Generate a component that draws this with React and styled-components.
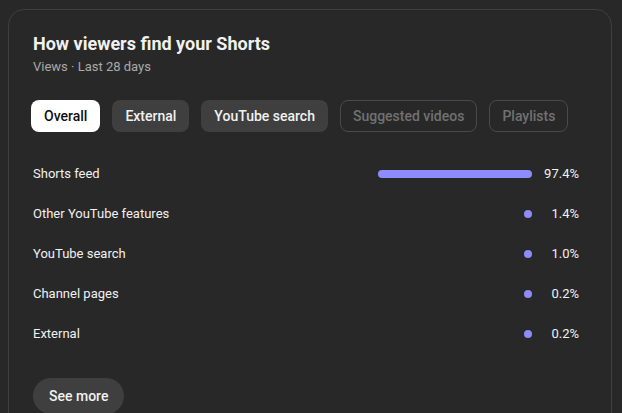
import React from "react";
import styled, { createGlobalStyle } from "styled-components";

const Global = createGlobalStyle`
  html, body { background: #282828; }
  body {
    margin: 0;
    padding: 9px 8px 0;
    font-family: Roboto, "Noto Sans", Arial, sans-serif;
    color: #f1f1f1;
    -webkit-font-smoothing: antialiased;
  }
`;

const Card = styled.section`
  box-sizing: border-box;
  width: 604px;
  border: 1px solid #3f3f3f;
  border-radius: 16px;
  background: #282828;
  padding: 22px 24px 24px;
`;

const Title = styled.h2`
  margin: 0;
  font-size: 18px;
  line-height: 24px;
  font-weight: 700;
  color: #f1f1f1;
`;

const Subtitle = styled.div`
  margin-top: 2px;
  font-size: 13px;
  line-height: 18px;
  color: #aaaaaa;
`;

const Chips = styled.div`
  display: flex;
  gap: 12px;
  margin: 24px 0 0 -2px;
`;

const Chip = styled.button`
  box-sizing: border-box;
  height: 32px;
  padding: 0 12px;
  border-radius: 8px;
  font-family: inherit;
  font-size: 14px;
  font-weight: 500;
  line-height: 20px;
  cursor: pointer;
  border: 1px solid
    ${(p) => (p.$variant === "disabled" ? "#4a4a4a" : "transparent")};
  background: ${(p) =>
    p.$variant === "active"
      ? "#ffffff"
      : p.$variant === "disabled"
      ? "transparent"
      : "#3f3f3f"};
  color: ${(p) =>
    p.$variant === "active"
      ? "#0f0f0f"
      : p.$variant === "disabled"
      ? "#717171"
      : "#f1f1f1"};
`;

const Rows = styled.div`
  margin-top: 22px;
  padding-right: 8px;
  display: flex;
  flex-direction: column;
`;

const Row = styled.div`
  display: flex;
  align-items: center;
  height: 40px;
`;

const Label = styled.div`
  flex: 1;
  font-size: 13px;
  line-height: 18px;
  color: #f1f1f1;
`;

const BarTrack = styled.div`
  width: 160px;
  display: flex;
  justify-content: flex-end;
`;

const Bar = styled.div`
  height: 8px;
  border-radius: 4px;
  background: #8e8bfc;
`;

const Value = styled.div`
  width: 47px;
  text-align: right;
  font-size: 13px;
  line-height: 18px;
  color: #f1f1f1;
`;

const SeeMore = styled.button`
  margin-top: 24px;
  height: 36px;
  padding: 0 16px;
  border: none;
  border-radius: 18px;
  background: #3f3f3f;
  color: #f1f1f1;
  font-family: inherit;
  font-size: 14px;
  font-weight: 500;
  cursor: pointer;
`;

const chips = [
  { label: "Overall", variant: "active" },
  { label: "External", variant: "normal" },
  { label: "YouTube search", variant: "normal" },
  { label: "Suggested videos", variant: "disabled" },
  { label: "Playlists", variant: "disabled" },
];

const rows = [
  { label: "Shorts feed", value: 97.4 },
  { label: "Other YouTube features", value: 1.4 },
  { label: "YouTube search", value: 1.0 },
  { label: "Channel pages", value: 0.2 },
  { label: "External", value: 0.2 },
];

export default function App() {
  return (
    <>
      <Global />
      <Card>
        <Title>How viewers find your Shorts</Title>
        <Subtitle>Views · Last 28 days</Subtitle>
        <Chips>
          {chips.map((c) => (
            <Chip key={c.label} $variant={c.variant}>
              {c.label}
            </Chip>
          ))}
        </Chips>
        <Rows>
          {rows.map((r) => (
            <Row key={r.label}>
              <Label>{r.label}</Label>
              <BarTrack>
                <Bar style={{ width: `${Math.max(8, (r.value / 100) * 158.5)}px` }} />
              </BarTrack>
              <Value>{r.value.toFixed(1)}%</Value>
            </Row>
          ))}
        </Rows>
        <SeeMore>See more</SeeMore>
      </Card>
    </>
  );
}
